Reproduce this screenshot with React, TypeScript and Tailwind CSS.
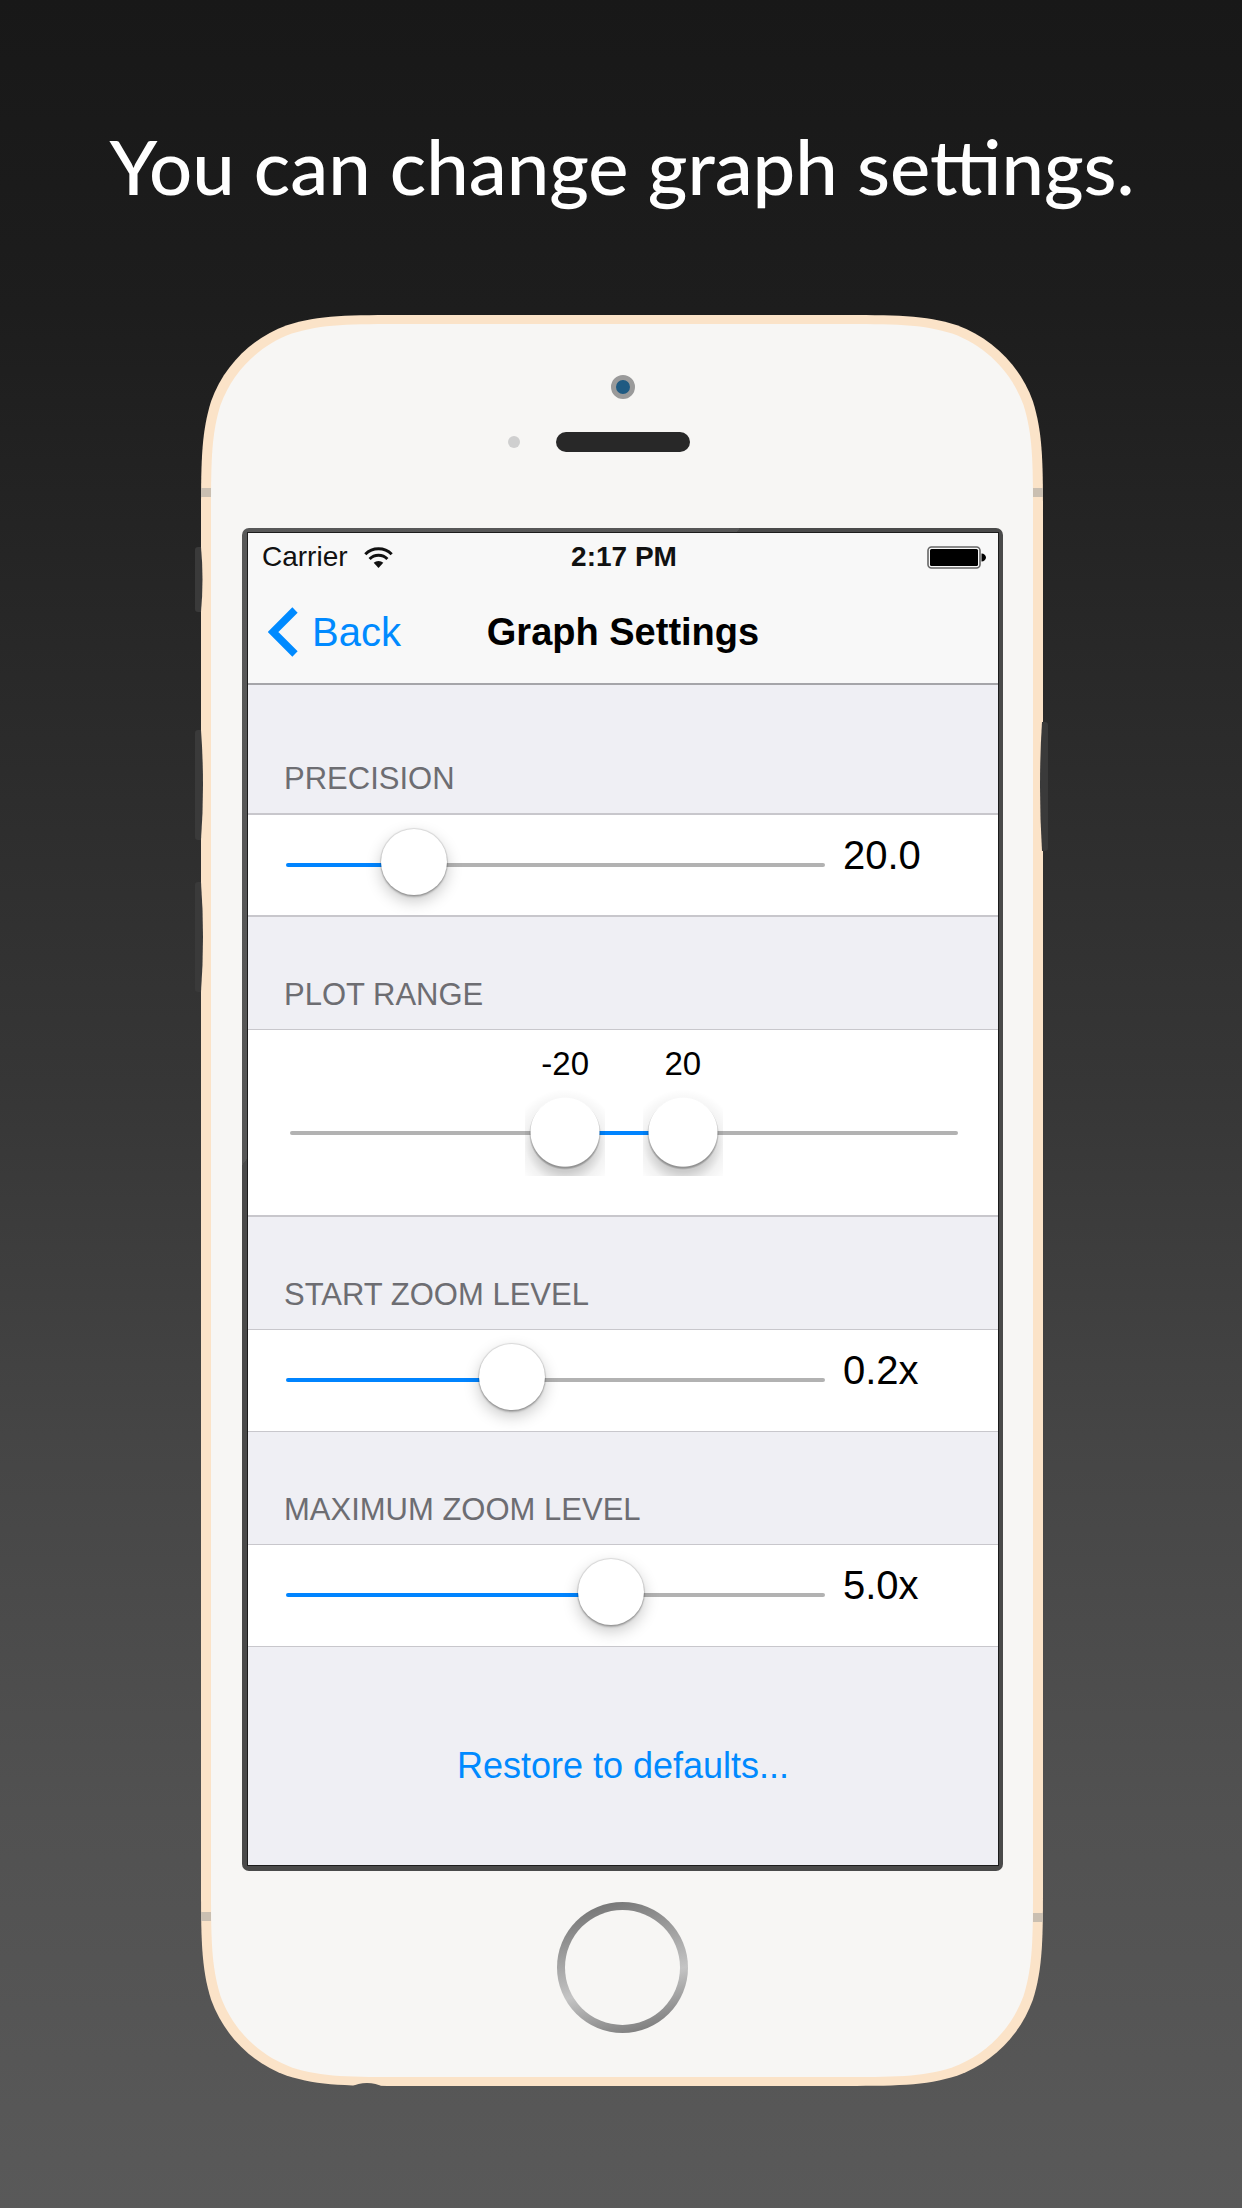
import { useState } from "react";
import type { CSSProperties } from "react";

const SANS = "font-['Liberation_Sans',Arial,sans-serif]";

/* Outline of a rounded body whose corners ease gradually into the straight sides. */
function smoothRect(x: number, y: number, w: number, h: number, r: number) {
  const a = 1.52866 * r;
  const b = 1.08849 * r;
  const c = 0.86841 * r;
  const d = 0.63149 * r;
  const e = 0.07491 * r;
  const f = 0.37282 * r;
  const g = 0.16906 * r;
  const X = x + w;
  const Y = y + h;
  return [
    `M${x + a} ${y}H${X - a}`,
    `C${X - b} ${y} ${X - c} ${y} ${X - d} ${y + e}`,
    `C${X - f} ${y + g} ${X - g} ${y + f} ${X - e} ${y + d}`,
    `C${X} ${y + c} ${X} ${y + b} ${X} ${y + a}`,
    `V${Y - a}`,
    `C${X} ${Y - b} ${X} ${Y - c} ${X - e} ${Y - d}`,
    `C${X - g} ${Y - f} ${X - f} ${Y - g} ${X - d} ${Y - e}`,
    `C${X - c} ${Y} ${X - b} ${Y} ${X - a} ${Y}`,
    `H${x + a}`,
    `C${x + b} ${Y} ${x + c} ${Y} ${x + d} ${Y - e}`,
    `C${x + f} ${Y - g} ${x + g} ${Y - f} ${x + e} ${Y - d}`,
    `C${x} ${Y - c} ${x} ${Y - b} ${x} ${Y - a}`,
    `V${y + a}`,
    `C${x} ${y + b} ${x} ${y + c} ${x + e} ${y + d}`,
    `C${x + g} ${y + f} ${x + f} ${y + g} ${x + d} ${y + e}`,
    `C${x + c} ${y} ${x + b} ${y} ${x + a} ${y}Z`,
  ].join("");
}

function DeviceShell() {
  return (
    <svg
      className="absolute inset-0 h-full w-full overflow-visible"
      viewBox="0 0 842 1771"
      preserveAspectRatio="none"
      aria-hidden="true"
    >
      <path d={smoothRect(0, 0, 842, 1771, 136)} fill="#fbe3c8" />
      <path d={smoothRect(10, 9, 822, 1753, 128)} fill="#f7f6f4" />
      <g fill="#cabfb1">
        <rect x="0" y="173" width="10" height="9" />
        <rect x="832" y="173" width="10" height="9" />
        <rect x="0" y="1597" width="10" height="9" />
        <rect x="832" y="1598" width="10" height="9" />
      </g>
      <g fill="#3a3a3a">
        <path d="M-3 232H0Q3 264 0 297H-3Q-6 297-6 294V235Q-6 232-3 232Z" />
        <path d="M-3 415H0Q4 470 0 525H-3Q-6 525-6 522V418Q-6 415-3 415Z" />
        <path d="M-3 567H0Q4 622 0 677H-3Q-6 677-6 674V570Q-6 567-3 567Z" />
        <path d="M841 407H844Q847 407 847 410V533Q847 536 844 536H841Q837 471 841 407Z" />
      </g>
      <path d="M150 1772Q157 1768 166 1768Q175 1768 182 1772Z" fill="#565656" />
    </svg>
  );
}

function WifiIcon() {
  return (
    <svg width="29" height="21" viewBox="0 0 29 21" fill="none" aria-hidden="true">
      <path d="M1.3 7.2A18.6 18.6 0 0 1 27.7 7.2" stroke="#111" strokeWidth="3" />
      <path d="M5.6 12A12.4 12.4 0 0 1 23.4 12" stroke="#111" strokeWidth="3" />
      <path d="M14.5 21L9.7 15.8A7 7 0 0 1 19.3 15.8Z" fill="#111" />
    </svg>
  );
}

function BatteryIcon() {
  return (
    <svg width="59" height="23" viewBox="0 0 59 23" fill="none" aria-hidden="true">
      <rect x="1" y="1" width="52" height="21" rx="3.5" stroke="#666" strokeWidth="1.6" />
      <rect x="3" y="3" width="48" height="17" rx="1.5" fill="#000" />
      <path d="M54.5 7.5C57 7.5 59 9.3 59 11.5S57 15.5 54.5 15.5Z" fill="#000" />
    </svg>
  );
}

function ChevronIcon() {
  return (
    <svg width="30" height="50" viewBox="0 0 30 50" fill="none" aria-hidden="true">
      <path d="M27 3L5 25L27 47" stroke="#008aff" strokeWidth="7.5" />
    </svg>
  );
}

function SectionTitle({ id, first, children }: { id: string; first?: boolean; children: string }) {
  return (
    <h2
      id={id}
      className={`px-9 pb-4 text-[31px] leading-9 font-normal text-[#6d6d72] ${first ? "pt-[76px]" : "pt-[60px]"}`}
    >
      {children}
    </h2>
  );
}

type SliderRowProps = {
  labelId: string;
  initial: number;
  max: number;
  step: number;
  suffix?: string;
  thin?: boolean;
};

function SliderRow({ labelId, initial, max, step, suffix = "", thin }: SliderRowProps) {
  const [value, setValue] = useState(initial);
  const style = { "--fill": `${(value / max) * 100}%` } as CSSProperties;
  return (
    <div
      className={`flex items-start gap-[18px] border-[#c8c7cc] bg-white pt-[14px] pl-[38px] ${thin ? "h-[103px] border-y" : "h-[104px] border-y-2"}`}
    >
      <input
        type="range"
        aria-labelledby={labelId}
        min={0}
        max={max}
        step={step}
        value={value}
        onChange={(e) => setValue(Number(e.target.value))}
        style={style}
        className="block h-[66px] min-w-0 flex-1 cursor-pointer appearance-none bg-transparent outline-none [&::-webkit-slider-runnable-track]:mt-[5px] [&::-webkit-slider-runnable-track]:h-1 [&::-webkit-slider-runnable-track]:rounded-full [&::-webkit-slider-runnable-track]:bg-[linear-gradient(to_right,#0084ff_var(--fill),#b2b2b2_var(--fill))] [&::-webkit-slider-thumb]:mt-[-34px] [&::-webkit-slider-thumb]:size-[66px] [&::-webkit-slider-thumb]:appearance-none [&::-webkit-slider-thumb]:rounded-full [&::-webkit-slider-thumb]:bg-white [&::-webkit-slider-thumb]:shadow-[0_0_1px_1px_rgba(0,0,0,0.12),0_2px_2px_rgba(0,0,0,0.22),0_6px_16px_rgba(0,0,0,0.22)]"
      />
      <output className="w-[155px] text-[40px] leading-[52px] text-black">
        {value.toFixed(1)}
        {suffix}
      </output>
    </div>
  );
}

const RANGE_THUMB =
  "pointer-events-none absolute inset-0 block h-full w-full appearance-none bg-transparent outline-none [&::-webkit-slider-thumb]:pointer-events-auto [&::-webkit-slider-thumb]:h-[86px] [&::-webkit-slider-thumb]:w-20 [&::-webkit-slider-thumb]:appearance-none [&::-webkit-slider-thumb]:bg-[radial-gradient(circle_at_50%_49%,#fff_34px,transparent_35px),radial-gradient(circle_at_50%_51%,rgba(0,0,0,0.28)_34px,transparent_36px),radial-gradient(circle_at_50%_62%,rgba(0,0,0,0.2)_28px,rgba(0,0,0,0.05)_40px,transparent_54px)]";

function PlotRangeRow({ labelId }: { labelId: string }) {
  const [low, setLow] = useState(-20);
  const [high, setHigh] = useState(20);
  const lowPos = `${(low + 100) / 2}%`;
  const highPos = `${(high + 100) / 2}%`;
  return (
    <div
      role="group"
      aria-labelledby={labelId}
      className="h-[188px] border-t border-b-2 border-[#c8c7cc] bg-white pt-[14px] pr-10 pl-[42px]"
    >
      <div className="relative mx-10 h-[46px] text-[33px] leading-10 text-black">
        <output className="absolute -translate-x-1/2" style={{ left: lowPos }}>
          {low}
        </output>
        <output className="absolute -translate-x-1/2" style={{ left: highPos }}>
          {high}
        </output>
      </div>
      <div className="relative flex h-[86px] items-center">
        <div className="h-1 w-full rounded-full bg-[#b2b2b2] px-10">
          <div className="relative h-1">
            <div
              className="absolute h-1 bg-[#0084ff]"
              style={{ left: lowPos, width: `${(high - low) / 2}%` }}
            />
          </div>
        </div>
        <input
          type="range"
          aria-label="Plot range minimum"
          min={-100}
          max={100}
          value={low}
          onChange={(e) => setLow(Math.min(Number(e.target.value), high))}
          className={RANGE_THUMB}
        />
        <input
          type="range"
          aria-label="Plot range maximum"
          min={-100}
          max={100}
          value={high}
          onChange={(e) => setHigh(Math.max(Number(e.target.value), low))}
          className={RANGE_THUMB}
        />
      </div>
    </div>
  );
}

function Screen() {
  return (
    <div className={`flex min-h-[1332px] flex-col bg-[#efeff4] ${SANS}`}>
      <header className="border-b-2 border-[#a5a5a9] bg-[#f8f8f8]">
        <div className="grid grid-cols-[1fr_auto_1fr] items-center pt-1 pr-3 pl-[14px] text-[28px] leading-10 text-[#111]">
          <div className="flex items-center gap-4">
            <span>Carrier</span>
            <WifiIcon />
          </div>
          <span className="font-bold">2:17 PM</span>
          <div className="justify-self-end">
            <BatteryIcon />
          </div>
        </div>
        <nav className="grid h-[106px] grid-cols-[1fr_auto_1fr] items-center px-5 pt-1">
          <button type="button" className="flex items-center gap-[14px] text-[40px] leading-[50px] text-[#008aff]">
            <ChevronIcon />
            Back
          </button>
          <h1 className="text-[38px] leading-[50px] font-bold text-black">Graph Settings</h1>
        </nav>
      </header>

      <section>
        <SectionTitle id="precision" first>PRECISION</SectionTitle>
        <SliderRow labelId="precision" initial={20} max={100} step={1} />
      </section>
      <section>
        <SectionTitle id="plot-range">PLOT RANGE</SectionTitle>
        <PlotRangeRow labelId="plot-range" />
      </section>
      <section>
        <SectionTitle id="start-zoom">START ZOOM LEVEL</SectionTitle>
        <SliderRow labelId="start-zoom" initial={0.2} max={0.49} step={0.01} suffix="x" thin />
      </section>
      <section>
        <SectionTitle id="maximum-zoom">MAXIMUM ZOOM LEVEL</SectionTitle>
        <SliderRow labelId="maximum-zoom" initial={5} max={8.1} step={0.1} suffix="x" thin />
      </section>

      <div className="flex flex-1 items-start justify-center pt-[98px]">
        <button type="button" className="text-[36px] leading-[42px] text-[#008aff]">
          Restore to defaults...
        </button>
      </div>
    </div>
  );
}

export default function App() {
  return (
    <main className="flex min-h-screen flex-col items-center bg-[linear-gradient(to_bottom,#181818_0%,#1d1d1d_14%,#2a2a2a_32%,#363636_49%,#454545_65%,#515151_82%,#595959_100%)] pt-[118px] pb-[122px] pl-[2px]">
      <p className="text-center font-['Lato','Open_Sans',sans-serif] text-[76px] leading-[95px] font-medium text-white">
        You can change graph settings.
      </p>

      <div className="relative mt-[102px] w-full max-w-[842px]">
        <DeviceShell />
        <div className="relative pt-[60px] pr-10 pb-[53px] pl-[41px]">
          <div className="mx-auto size-6 rounded-full border-5 border-[#9a9a9a] bg-[#1f5a82]" />
          <div className="mt-[33px] grid grid-cols-[1fr_auto_1fr] items-center">
            <span className="mr-9 size-3 justify-self-end rounded-full bg-[#cfcfcf]" />
            <span className="h-5 w-[134px] rounded-full bg-[#282828]" />
          </div>

          <div className="mt-[76px] rounded-[7px] bg-[linear-gradient(128deg,#585858_0%,#565656_27.5%,#4a4a4a_27.5%)] pt-1 pr-1 pb-[5px] pl-[5px]">
            <div className="border border-[#1c1c1c]">
              <Screen />
            </div>
          </div>

          <button
            type="button"
            aria-label="Home"
            className="mx-auto mt-[31px] block size-[131px] rounded-full bg-[linear-gradient(165deg,#727272_5%,#c4c4c4_60%,#777_95%)] p-2"
          >
            <span className="block h-full w-full rounded-full bg-[#f7f6f4]" />
          </button>
        </div>
      </div>
    </main>
  );
}
